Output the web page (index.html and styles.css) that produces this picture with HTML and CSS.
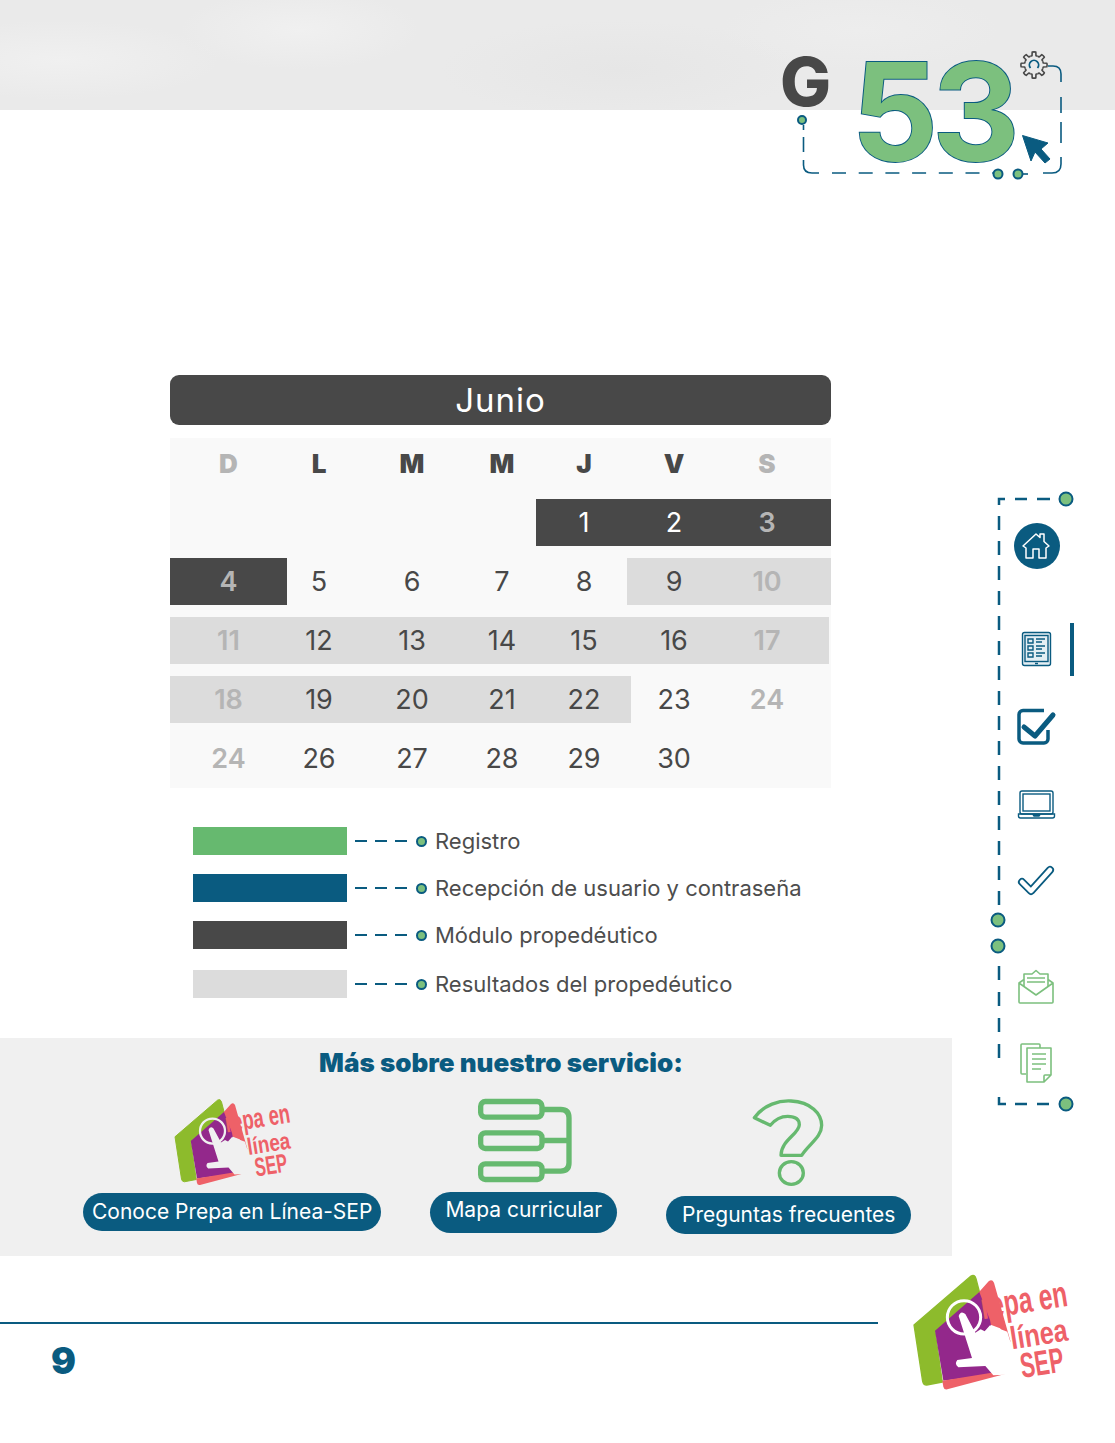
FILE: index.html
```html
<!DOCTYPE html>
<html lang="es">
<head>
<meta charset="utf-8">
<title>Convocatoria G53</title>
<link rel="stylesheet" href="styles.css">
</head>
<body>
<svg class="defs" width="0" height="0">
  <symbol id="logo" viewBox="0 0 600 420">
    <path class="logo-green" d="M72 195 243 48Q254 42 258 56L272 110 135 215 157 366 110 375Q100 375 98 364Z"/>
    <path class="logo-coral" d="M262 102 296 64Q306 56 312 68L362 246 330 205 290 190Z"/>
    <path class="logo-purple" d="M135 212 268 96 300 180 330 340 160 362Z"/>
    <path class="logo-coral" d="M157 362 305 338 345 342 172 388Q162 390 160 380Z"/>
    <path class="logo-hand" d="M206 168Q212 150 226 162L256 218 272 208 284 214 300 196 352 215 366 262 338 300 345 344 310 346 286 318 205 322Q192 312 202 300L246 294Z"/>
    <circle class="logo-ring" cx="222" cy="172" r="50"/>
    <text class="logo-text" transform="translate(278 178) rotate(-9) scale(.67 1)" font-size="110">repa en</text>
    <text class="logo-text" transform="translate(366 268) rotate(-9) scale(.8 1)" font-size="95">línea</text>
    <text class="logo-text" transform="translate(397 354) rotate(-9) scale(.62 1)" font-size="105">SEP</text>
  </symbol>
</svg>

<header class="top">
  <div class="group-tag">
    <svg class="tag-frame" viewBox="0 0 290 145" width="290" height="145">
      <path class="frame-dash" d="M23.5 85V90M23.5 97V112M23.5 120V125Q23.5 133 32 133H39"/>
      <path class="frame-dash" d="M52 133H215" stroke-dasharray="14 12.7"/>
      <path class="frame-dash" d="M238 134H248"/>
      <path class="frame-dash" d="M263 133H272Q281 133 281 124V117"/>
      <path class="frame-dash" d="M281 103V82M281 73V57"/>
      <path class="frame-dash" d="M268 26H273Q281 26 281 34V42"/>
      <circle class="frame-dot small" cx="22" cy="80" r="4"/>
      <circle class="frame-dot small" cx="218" cy="134" r="4.5"/>
      <circle class="frame-dot small" cx="238" cy="134" r="4.5"/>
      <g class="gear" transform="translate(254 25)">
        <path id="tooth" d="M8.78-3.64 9.29-1.98 12.87-1.81Q13.4 0 12.87 1.81L9.29 1.98 8.78 3.64"/>
        <use href="#tooth" transform="rotate(45)"/>
        <use href="#tooth" transform="rotate(90)"/>
        <use href="#tooth" transform="rotate(135)"/>
        <use href="#tooth" transform="rotate(180)"/>
        <use href="#tooth" transform="rotate(225)"/>
        <use href="#tooth" transform="rotate(270)"/>
        <use href="#tooth" transform="rotate(315)"/>
        <path class="gear-arc" d="M-3.5 3A4.6 4.6 0 1 1 3.5 3"/>
      </g>
      <path class="arrow" d="M242.5 95.5 268 103 261 109 270 119 265 123 255 112 251 121Z"/>
    </svg>
    <div class="tag-text">
      <span class="tag-letter">G</span>
      <span class="tag-number">53</span>
    </div>
  </div>
</header>

<main class="content">
  <h1 class="month">Junio</h1>
  <section class="calendar">
    <div class="week head">
      <span class="off">D</span><span>L</span><span>M</span><span>M</span><span>J</span><span>V</span><span class="off">S</span>
    </div>
    <div class="week">
      <i class="band dark from-thu"></i>
      <span></span><span></span><span></span><span></span><span class="on-dark">1</span><span class="on-dark">2</span><span class="off">3</span>
    </div>
    <div class="week">
      <i class="band dark only-sun"></i>
      <i class="band light from-fri"></i>
      <span class="off">4</span><span>5</span><span>6</span><span>7</span><span>8</span><span>9</span><span class="off">10</span>
    </div>
    <div class="week">
      <i class="band light all-week"></i>
      <span class="off">11</span><span>12</span><span>13</span><span>14</span><span>15</span><span>16</span><span class="off">17</span>
    </div>
    <div class="week">
      <i class="band light to-thu"></i>
      <span class="off">18</span><span>19</span><span>20</span><span>21</span><span>22</span><span>23</span><span class="off">24</span>
    </div>
    <div class="week">
      <span class="off">24</span><span>26</span><span>27</span><span>28</span><span>29</span><span>30</span><span></span>
    </div>
  </section>

  <ul class="legend">
    <li><i class="swatch green"></i><i class="leader"></i><i class="bullet"></i>Registro</li>
    <li><i class="swatch blue"></i><i class="leader"></i><i class="bullet"></i>Recepción de usuario y contraseña</li>
    <li><i class="swatch grey"></i><i class="leader"></i><i class="bullet"></i>Módulo propedéutico</li>
    <li><i class="swatch pale"></i><i class="leader"></i><i class="bullet"></i>Resultados del propedéutico</li>
  </ul>
</main>

<section class="service">
  <h2>Más sobre nuestro servicio:</h2>
  <div class="links">
    <div class="link link-logo">
      <svg class="service-logo" width="150" height="105"><use href="#logo"/></svg>
      <a class="pill">Conoce Prepa en Línea-SEP</a>
    </div>
    <div class="link link-map">
      <svg viewBox="170 20 300 260" width="100" height="87">
        <g class="map-icon">
          <rect x="190" y="33" width="184" height="47" rx="14"/>
          <rect x="190" y="127" width="184" height="47" rx="14"/>
          <rect x="190" y="220" width="184" height="47" rx="14"/>
          <path d="M380 57H430Q455 57 455 82V217Q455 242 430 242H380M380 150H455"/>
        </g>
      </svg>
      <a class="pill tall">Mapa curricular</a>
    </div>
    <div class="link link-faq">
      <svg viewBox="1020 20 225 270" width="75" height="90">
        <g class="faq-icon">
          <path d="M1030 82C1060 42 1105 30 1140 32 1200 35 1232 70 1232 105 1232 140 1195 160 1172 195H1110C1110 150 1165 130 1165 103 1165 85 1150 78 1130 78 1110 78 1090 90 1078 105Z"/>
          <ellipse cx="1141" cy="248" rx="36" ry="34"/>
        </g>
      </svg>
      <a class="pill">Preguntas frecuentes</a>
    </div>
  </div>
</section>

<footer class="bottom">
  <div class="bottom-rule">
    <hr>
    <span class="page-number">9</span>
  </div>
  <svg class="footer-logo" width="200" height="140"><use href="#logo"/></svg>
</footer>

<nav class="side">
  <svg class="rail" viewBox="0 0 90 625" width="90" height="625">
    <path class="rail-dash" d="M60 9H25" stroke-dasharray="13 10"/>
    <path class="rail-dash" d="M15 9H9V15"/>
    <path class="rail-dash" d="M9 26V422" stroke-dasharray="14 11"/>
    <path class="rail-dash" d="M9 476V570" stroke-dasharray="14 12"/>
    <path class="rail-dash" d="M9 607V614H16"/>
    <path class="rail-dash" d="M25 614H60" stroke-dasharray="12 10"/>
    <circle class="frame-dot" cx="76" cy="9" r="6.5"/>
    <circle class="frame-dot" cx="8" cy="430" r="6.5"/>
    <circle class="frame-dot" cx="8" cy="456" r="6.5"/>
    <circle class="frame-dot" cx="76" cy="614" r="6.5"/>
  </svg>
  <a class="nav-item">
    <svg viewBox="0 0 46 46" width="46" height="46">
      <circle class="home-disc" cx="23" cy="23" r="23"/>
      <path class="home-house" d="M9 23 22 11 26 14.500V11H30V18.500L35 23 32 25V35H25V26H19V35H12V25Z"/>
    </svg>
  </a>
  <a class="nav-item current">
    <svg viewBox="0 0 46 46" width="46" height="46">
      <g class="line-blue">
        <rect class="tablet" x="8.500" y="5.500" width="28" height="33" rx="2"/>
        <rect x="11" y="8.500" width="23" height="26"/>
        <path d="M14 12H19V16H14ZM14 19H19V23H14ZM14 26H19V30H14ZM22 12H31M22 15H28M22 19H31M22 22H28M22 26H31M22 29H28M21 36.500H24"/>
      </g>
    </svg>
  </a>
  <a class="nav-item">
    <svg viewBox="0 0 46 46" width="46" height="46">
      <path class="check-box" d="M30 6.500H9A4 4 0 0 0 5 10.500V35A4 4 0 0 0 9 39H30A4 4 0 0 0 34 35V26"/>
      <path class="check-mark" d="M10 23 21 32 39 11"/>
    </svg>
  </a>
  <a class="nav-item">
    <svg viewBox="0 0 46 46" width="46" height="46">
      <g class="line-blue">
        <rect x="6" y="10" width="33" height="23" rx="2"/>
        <rect x="9" y="13" width="27" height="17"/>
        <path d="M4.500 33H40.500V35Q40.500 37 38.500 37H6.500Q4.500 37 4.500 35ZM19 33.500H26L25 35H20Z"/>
      </g>
    </svg>
  </a>
  <a class="nav-item">
    <svg viewBox="0 0 46 46" width="46" height="46">
      <path class="tick-outer" d="M8 24 17 33 36 12"/>
      <path class="tick-inner" d="M8 24 17 33 36 12"/>
    </svg>
  </a>
  <a class="nav-item docs-first">
    <svg viewBox="0 0 46 46" width="46" height="46">
      <g class="line-green">
        <path d="M5 19V38Q5 39 6 39H38Q39 39 39 38V19L34 15.500M10 15.500 5 19 22 31 39 19"/>
        <path d="M10 23V10H18L22 6.500 26 10H34V23"/>
        <path d="M13 14H31M13 18H31"/>
      </g>
    </svg>
  </a>
  <a class="nav-item">
    <svg viewBox="0 0 46 46" width="46" height="46">
      <g class="line-green">
        <path d="M12 33H8Q7 33 7 32V4Q7 3 8 3H25Q26 3 26 4V7"/>
        <path d="M13 7H37V34L30 41H13ZM37 34H31Q30 34 30 35V41"/>
        <path d="M18 13H32M18 18H32M18 23H32M18 28H27"/>
      </g>
    </svg>
  </a>
</nav>
</body>
</html>
```

FILE: styles.css
```css
* { box-sizing: border-box; }
html, body { margin: 0; }
body { position: relative; height: 1443px; overflow: hidden; background: white; color: #484848; font-family: Inter, "Liberation Sans", sans-serif; }
h1, h2, ul { margin: 0; padding: 0; }
i { display: block; font-style: normal; }
.defs { position: absolute; }

/* cabecera */
.top { position: relative; height: 110px;
  background:
    radial-gradient(ellipse 120px 40px at 300px 30px, #f0f0f0, transparent),
    radial-gradient(ellipse 180px 50px at 620px 70px, #e6e6e6, transparent),
    radial-gradient(ellipse 160px 40px at 60px 60px, #f0f0f0, transparent),
    radial-gradient(ellipse 140px 40px at 860px 30px, #ededed, transparent),
    #eaeaea; }
.group-tag { position: absolute; left: 780px; top: 40px; width: 290px; height: 145px; }
.tag-frame { position: absolute; left: 0; top: 0; }
.tag-text { position: absolute; left: 0; top: 0; display: flex; align-items: flex-start; }
.tag-letter { margin-top: 1px; font-size: 68px; line-height: 80px; font-weight: 800; }
.tag-number { margin: -8px 0 0 20px; font-size: 136px; line-height: 160px; font-weight: 700; letter-spacing: -6px; color: #7cc07e; -webkit-text-stroke: 2px #0a5b80; paint-order: stroke fill; }
.frame-dash { fill: none; stroke: #0a5b80; stroke-width: 1.6; }
.frame-dot { fill: #7cc07e; stroke: #0a5b80; stroke-width: 2; }
.gear path { fill: none; stroke: #484848; stroke-width: 1.6; stroke-linejoin: round; }
.gear use { fill: none; stroke: #484848; stroke-width: 1.6; }
.gear .gear-arc { stroke: #0a5b80; stroke-width: 1.8; }
.arrow { fill: #0a5b80; stroke: #0a5b80; stroke-linejoin: round; }

/* calendario */
.content { width: 661px; margin: 265px 0 0 170px; }
.month { height: 50px; border-radius: 9px; background: #484848; color: white; font-size: 33px; line-height: 50px; font-weight: 400; letter-spacing: 1px; text-align: center; }
.calendar { display: grid; row-gap: 12px; height: 350px; margin-top: 13px; padding-top: 61px; background: #f9f9f9; position: relative; align-content: start; }
.week { display: grid; grid-template-columns: 117px 64px 122px 58px 106px 74px 112px 8px; height: 47px; font-size: 27px; font-weight: 400; line-height: 47px; }
.week span { grid-row: 1; text-align: center; }
.week span:nth-of-type(1) { grid-column: 1; }
.week span:nth-of-type(2) { grid-column: 2; }
.week span:nth-of-type(3) { grid-column: 3; }
.week span:nth-of-type(4) { grid-column: 4; }
.week span:nth-of-type(5) { grid-column: 5; }
.week span:nth-of-type(6) { grid-column: 6; }
.week span:nth-of-type(7) { grid-column: 7; }
.week .off { color: #b5b5b5; font-weight: 600; }
.week .on-dark { color: white; }
.head { position: absolute; left: 0; top: 2px; font-size: 26px; font-weight: 900; }
.week.head .off { font-weight: 900; }
.band { grid-row: 1; }
.dark { background: #484848; }
.light { background: #dcdcdc; }
.from-thu { grid-column: 5 / -1; margin-left: 5px; }
.only-sun { grid-column: 1 / 2; }
.from-fri { grid-column: 6 / -1; margin-left: -10px; }
.all-week { grid-column: 1 / -1; margin-right: 2px; }
.to-thu { grid-column: 1 / 6; margin-right: 6px; }

/* leyenda */
.legend { display: flex; flex-direction: column; gap: 19px; margin-top: 39px; list-style: none; }
.legend li { display: flex; align-items: center; height: 28px; padding-left: 23px; font-size: 22px; color: #4d4d4d; }
.legend li:last-child { margin-top: 2px; }
.swatch { width: 154px; height: 28px; }
.green { background: #66b96f; }
.blue { background: #0a5b80; }
.grey { background: #484848; }
.pale { background: #dcdcdc; }
.leader { width: 52px; height: 2px; margin-left: 8px; background: repeating-linear-gradient(90deg, #0a5b80 0 12px, transparent 12px 20px); }
.bullet { width: 11px; height: 11px; margin: 0 8px 0 9px; border: 2px solid #0a5b80; border-radius: 50%; background: #7cc07e; }

/* servicio */
.service { width: 952px; height: 218px; margin-top: 40px; background: #f0f0f0; }
.service h2 { height: 50px; padding-left: 50px; color: #0a5b80; font-size: 26px; line-height: 50px; font-weight: 900; text-align: center; }
.links { display: flex; align-items: flex-start; gap: 49px; padding-left: 83px; }
.link { display: flex; flex-direction: column; align-items: center; }
.link-map { margin-top: 9px; gap: 8px; }
.link-faq { margin-top: 9px; gap: 9px; }
.pill { display: block; height: 38px; padding: 0 9px; border-radius: 19px; background: #0a5b80; color: white; font-size: 21px; line-height: 38px; white-space: nowrap; }
.pill.tall { height: 41px; padding: 0 15px; border-radius: 21px; line-height: 36px; }
.link-faq .pill { padding: 0 16px; }
.map-icon { fill: none; stroke: #66b96f; stroke-width: 16; }
.faq-icon { fill: none; stroke: #66b96f; stroke-width: 10; stroke-linejoin: round; }

/* logo */
.logo-green { fill: #8dbb2c; stroke: #8dbb2c; stroke-width: 4; stroke-linejoin: round; }
.logo-coral { fill: #ee6168; }
.logo-purple { fill: #93288b; }
.logo-hand { fill: currentColor; }
.logo-ring { fill: none; stroke: currentColor; stroke-width: 9; }
.logo-text { fill: #ee6168; font-family: "Liberation Sans", sans-serif; font-weight: 700; }
.service-logo { color: #f0f0f0; }
.footer-logo { color: white; }

/* pie */
.bottom { display: flex; align-items: flex-start; }
.bottom-rule { width: 890px; }
.bottom-rule hr { width: 878px; height: 2px; margin: 66px 0 0; border: 0; background: #0a5b80; }
.page-number { display: block; margin: 14px 0 0 51px; color: #0a5b80; font-size: 37px; line-height: 45px; font-weight: 900; }
.footer-logo { flex: none; margin-top: 4px; }

/* navegación lateral */
.side { position: absolute; left: 990px; top: 490px; display: flex; flex-direction: column; gap: 31px; width: 90px; height: 625px; padding: 33px 0 0 24px; }
.rail { position: absolute; left: 0; top: 0; }
.rail-dash { fill: none; stroke: #0a5b80; stroke-width: 2.500; }
.nav-item { position: relative; display: block; width: 46px; height: 46px; }
.nav-item svg { display: block; }
.nav-item.current { margin-top: 27px; }
.nav-item.current::after { content: ""; position: absolute; left: 56px; top: -4px; width: 4px; height: 53px; background: #0a5b80; }
.nav-item.docs-first { margin-top: 29px; }
.home-disc { fill: #0a5b80; }
.home-house { fill: none; stroke: white; stroke-width: 1.500; stroke-linejoin: round; }
.line-blue { fill: none; stroke: #0a5b80; stroke-width: 1.400; }
.tablet { fill: #e4eef3; }
.check-box { fill: none; stroke: #0a5b80; stroke-width: 3.500; }
.check-mark { fill: none; stroke: #0a5b80; stroke-width: 5; stroke-linecap: round; stroke-linejoin: round; }
.tick-outer { fill: none; stroke: #0a5b80; stroke-width: 8; stroke-linecap: round; stroke-linejoin: round; }
.tick-inner { fill: none; stroke: white; stroke-width: 4.500; stroke-linecap: round; stroke-linejoin: round; }
.line-green { fill: none; stroke: #7cc07e; stroke-width: 1.600; stroke-linejoin: round; }
```
